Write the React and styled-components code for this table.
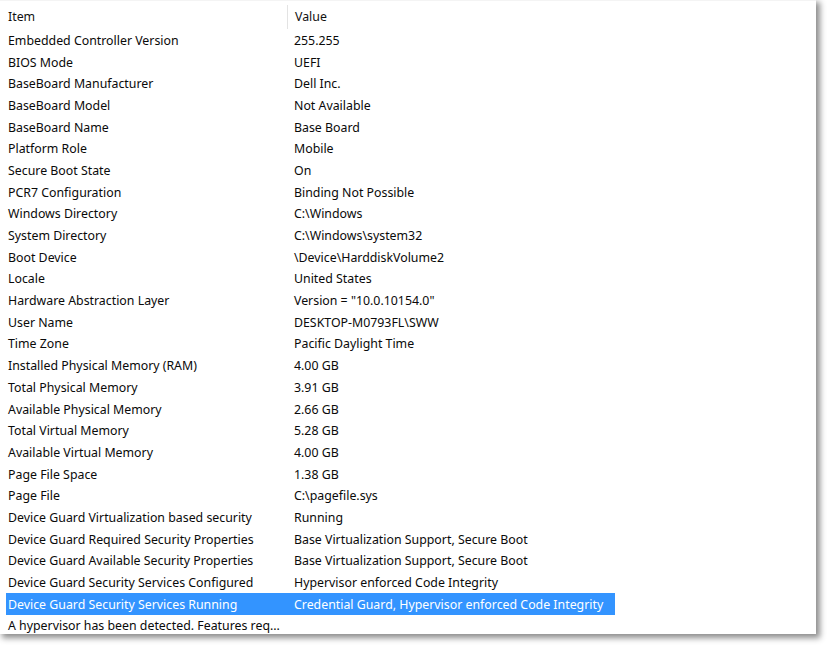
import React from 'react';
import styled, { createGlobalStyle } from 'styled-components';

const GlobalStyle = createGlobalStyle`
  html, body {
    margin: 0;
    padding: 0;
    background: #ffffff;
  }
  body {
    font-family: 'Noto Sans', 'Open Sans', 'DejaVu Sans', sans-serif;
  }
`;

const Page = styled.div`
  width: 828px;
  height: 646px;
  overflow: hidden;
  background: #ffffff;
`;

const Panel = styled.div`
  width: 816px;
  height: 634px;
  background: #ffffff;
  box-shadow: 3px 3px 6px 1px rgba(0, 0, 0, 0.45);
  border-top: 1px solid #f4f4f4;
  box-sizing: border-box;
  overflow: hidden;
`;

const Header = styled.div`
  display: grid;
  grid-template-columns: 281px 328px;
  margin-left: 6px;
  height: 28.5px;
  align-items: center;
  color: #111111;
  font-size: 12.35px;
`;

const HeaderCell = styled.div`
  height: 24px;
  line-height: 24px;
  padding-left: ${p => (p.$first ? 2 : 7)}px;
  border-left: ${p => (p.$first ? 'none' : '1px solid #e3e3e3')};
  margin-top: 3px;
`;

const List = styled.div`
  display: flex;
  flex-direction: column;
`;

const Row = styled.div`
  display: grid;
  grid-template-columns: 281px 328px;
  margin-left: 6px;
  width: 609px;
  height: 21.7px;
  align-items: center;
  font-size: 12.35px;
  color: ${p => (p.$selected ? '#ffffff' : '#0a0a0a')};
  background: ${p => (p.$selected ? '#3394ff' : 'transparent')};
  white-space: nowrap;
`;

const Cell = styled.div`
  padding-left: ${p => (p.$first ? 2 : 7)}px;
  overflow: visible;
`;

const rows = [
  ['Embedded Controller Version', '255.255'],
  ['BIOS Mode', 'UEFI'],
  ['BaseBoard Manufacturer', 'Dell Inc.'],
  ['BaseBoard Model', 'Not Available'],
  ['BaseBoard Name', 'Base Board'],
  ['Platform Role', 'Mobile'],
  ['Secure Boot State', 'On'],
  ['PCR7 Configuration', 'Binding Not Possible'],
  ['Windows Directory', 'C:\\Windows'],
  ['System Directory', 'C:\\Windows\\system32'],
  ['Boot Device', '\\Device\\HarddiskVolume2'],
  ['Locale', 'United States'],
  ['Hardware Abstraction Layer', 'Version = "10.0.10154.0"'],
  ['User Name', 'DESKTOP-M0793FL\\SWW'],
  ['Time Zone', 'Pacific Daylight Time'],
  ['Installed Physical Memory (RAM)', '4.00 GB'],
  ['Total Physical Memory', '3.91 GB'],
  ['Available Physical Memory', '2.66 GB'],
  ['Total Virtual Memory', '5.28 GB'],
  ['Available Virtual Memory', '4.00 GB'],
  ['Page File Space', '1.38 GB'],
  ['Page File', 'C:\\pagefile.sys'],
  ['Device Guard Virtualization based security', 'Running'],
  ['Device Guard Required Security Properties', 'Base Virtualization Support, Secure Boot'],
  ['Device Guard Available Security Properties', 'Base Virtualization Support, Secure Boot'],
  ['Device Guard Security Services Configured', 'Hypervisor enforced Code Integrity'],
  ['Device Guard Security Services Running', 'Credential Guard, Hypervisor enforced Code Integrity'],
  ['A hypervisor has been detected. Features req...', ''],
];

const SELECTED = 26;

export default function App() {
  return (
    <Page>
      <GlobalStyle />
      <Panel>
        <Header>
          <HeaderCell $first>Item</HeaderCell>
          <HeaderCell>Value</HeaderCell>
        </Header>
        <List>
          {rows.map(([item, value], i) => (
            <Row key={i} $selected={i === SELECTED}>
              <Cell $first>{item}</Cell>
              <Cell>{value}</Cell>
            </Row>
          ))}
        </List>
      </Panel>
    </Page>
  );
}
